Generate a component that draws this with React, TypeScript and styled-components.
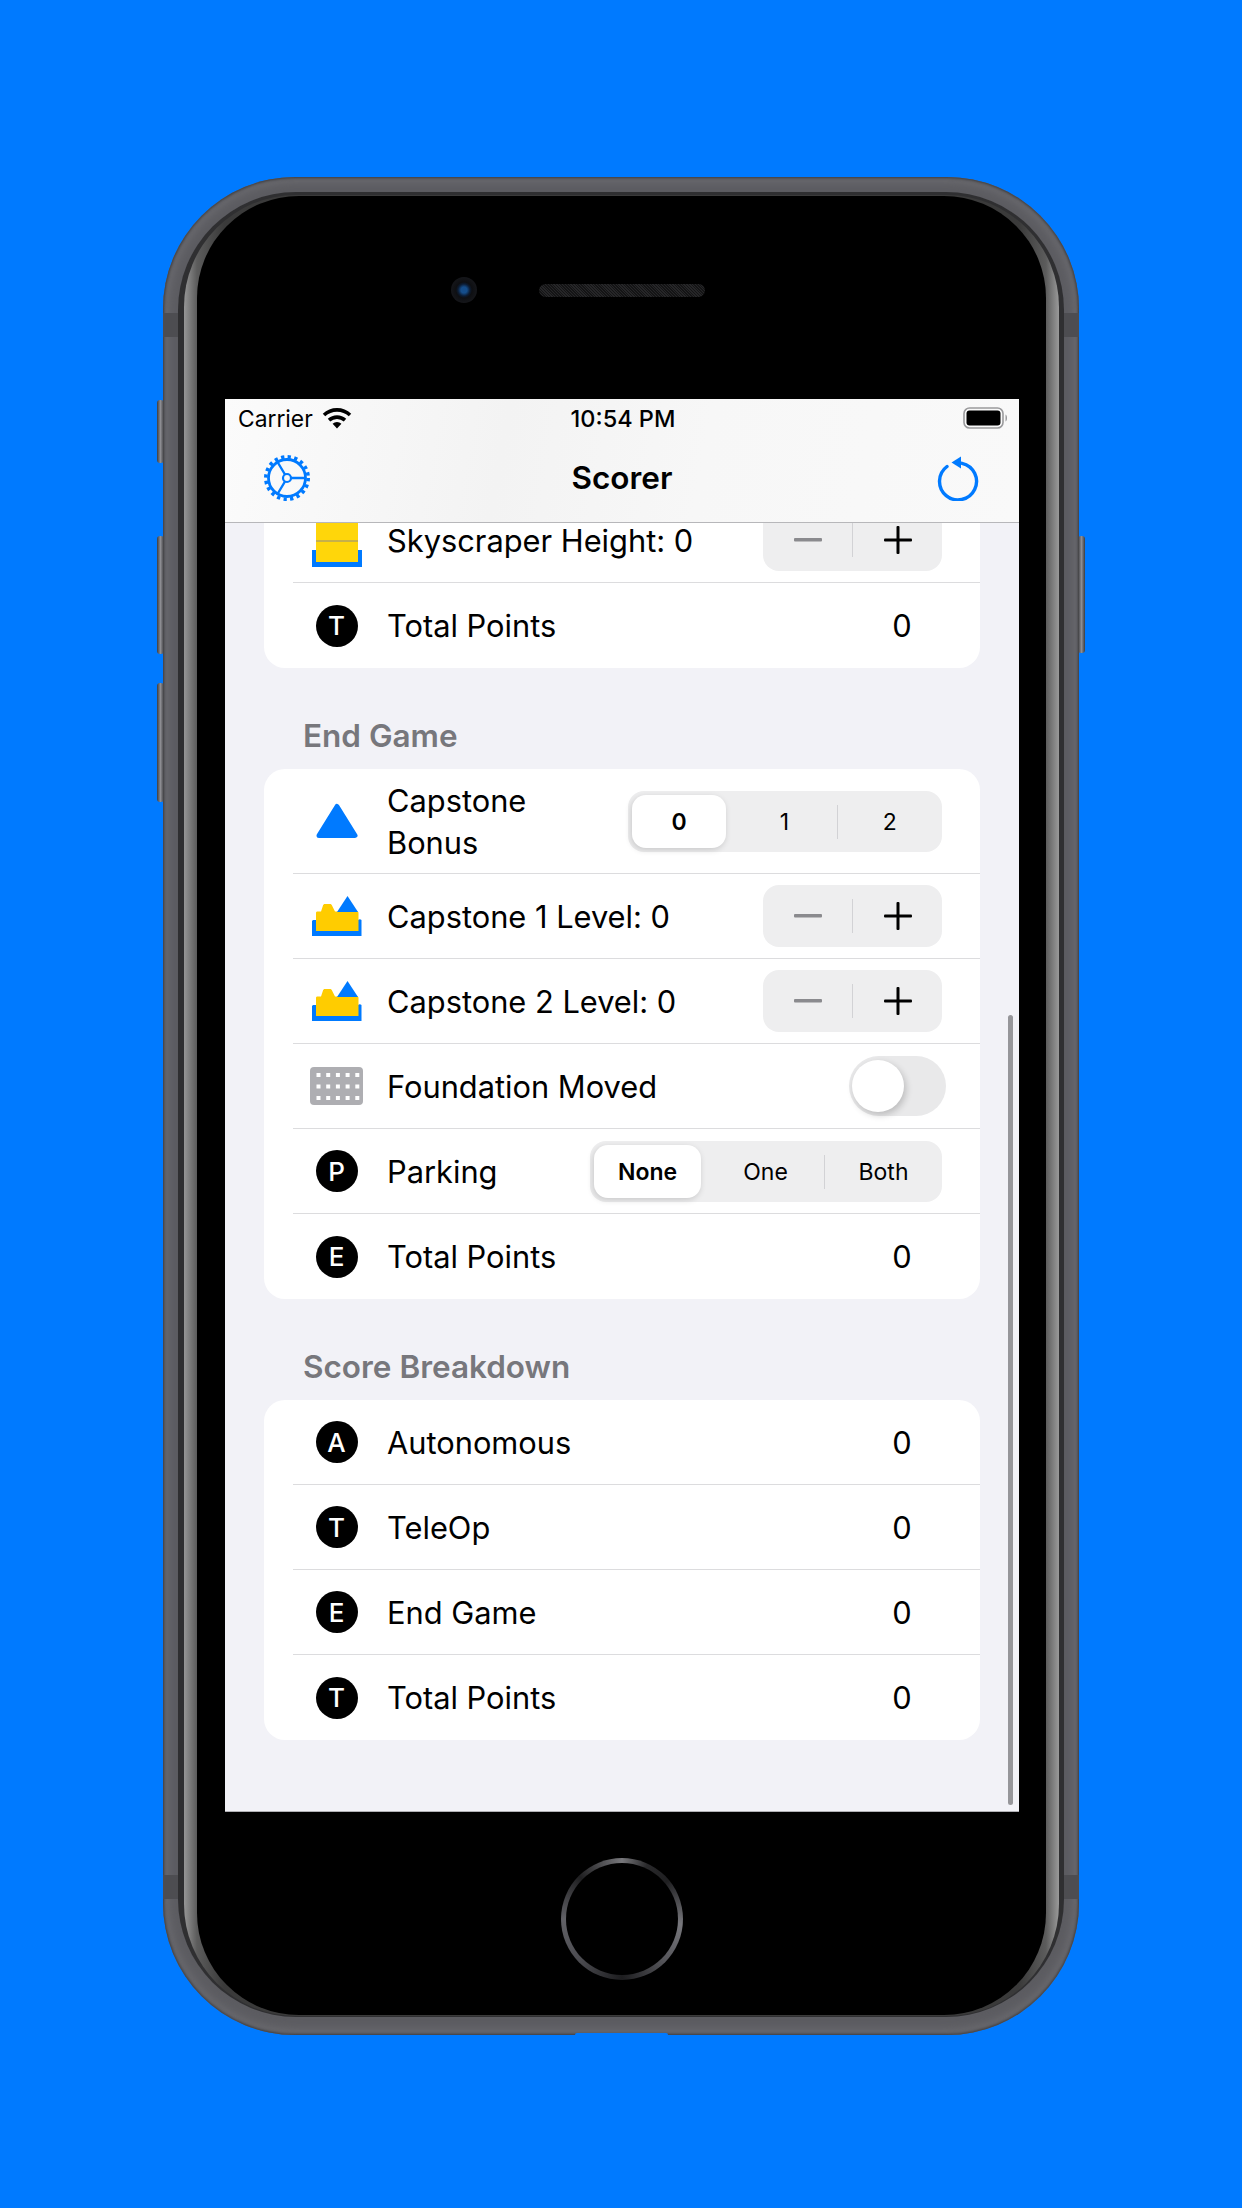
import React from 'react';
import styled, { createGlobalStyle } from 'styled-components';

const blue = '#007aff';
const yellow = '#ffcc00';

const GlobalStyle = createGlobalStyle`
  html, body {
    margin: 0;
    background: ${blue};
  }
  body {
    font-family: Inter, "Liberation Sans", sans-serif;
    color: #000;
  }
  * {
    box-sizing: border-box;
  }
`;

const Page = styled.div`
  width: 1242px;
  height: 2208px;
  padding-top: 177px;
  display: flex;
  justify-content: center;
  overflow: hidden;
  background: ${blue};
`;

const Phone = styled.div`
  position: relative;
  width: 916px;
  height: 1858px;
  padding: 15px 15px 18px 15px;
  display: flex;
  border-radius: 132px;
  background: #5c5c61;
  box-shadow: inset 0 0 3px 1px #38383b, inset 0 0 10px 5px #6c6c71;
`;

const DarkBand = styled.div`
  flex: 1;
  display: flex;
  padding: 3px 5px 1px 6px;
  border-radius: 118px;
  background: #2f2f31;
`;

const LightRing = styled.div`
  flex: 1;
  display: flex;
  padding: 1px 13px 1px 13px;
  border-radius: 112px;
  background: linear-gradient(
    to right,
    #969696 0,
    #5c5c5c 13px,
    #3a3a3a 40px,
    #3a3a3a calc(100% - 40px),
    #5c5c5c calc(100% - 13px),
    #9a9a9a 100%
  );
`;

const Bezel = styled.div`
  flex: 1;
  display: flex;
  flex-direction: column;
  padding: 0 27px 0 28px;
  border-radius: 102px;
  background: #000;
`;

const SideButton = styled.div<{ $right?: boolean; $top: number; $height: number }>`
  position: absolute;
  top: ${(p) => p.$top}px;
  height: ${(p) => p.$height}px;
  width: 7px;
  ${(p) => (p.$right ? 'right: -6px;' : 'left: -6px;')}
  border-radius: 3px;
  background: linear-gradient(to right, #3d3d40, #8d8d92 50%, #3d3d40);
`;

const AntennaBand = styled.div<{ $right?: boolean; $top: number }>`
  position: absolute;
  top: ${(p) => p.$top}px;
  ${(p) => (p.$right ? 'right: 0;' : 'left: 0;')}
  width: 15px;
  height: 24px;
  background: #4d4d51;
`;

const BottomNotch = styled.div`
  position: absolute;
  left: 412px;
  bottom: 0;
  width: 93px;
  height: 2px;
  border-radius: 3px 3px 0 0;
  background: ${blue};
`;

const TopBezel = styled.div`
  flex: 0 0 203px;
  padding-top: 88px;
  display: flex;
  justify-content: center;
  align-items: flex-start;
`;

const Speaker = styled.div`
  position: relative;
  width: 166px;
  height: 13px;
  border-radius: 7px;
  background: repeating-linear-gradient(45deg, #141415 0 1px, #262628 1px 2px);
`;

const Camera = styled.div`
  position: absolute;
  right: calc(100% + 62px);
  top: -7px;
  width: 26px;
  height: 26px;
  border-radius: 50%;
  background: radial-gradient(circle, #154d8a 0 3px, #0c1c33 6px, #0e0f12 8px, #15161a 13px);
`;

const HomeBezel = styled.div`
  flex: 0 0 203px;
  padding-top: 46px;
  display: flex;
  justify-content: center;
  align-items: flex-start;
`;

const HomeRing = styled.div`
  width: 122px;
  height: 122px;
  padding: 5px;
  border-radius: 50%;
  background: conic-gradient(
    #77777b 0deg,
    #29292b 25deg,
    #1f1f21 50deg,
    #77777c 95deg,
    #55555a 135deg,
    #1d1d1f 180deg,
    #4b4b50 225deg,
    #616166 270deg,
    #1f1f21 315deg,
    #77777b 360deg
  );
`;

const HomeInner = styled.div`
  width: 100%;
  height: 100%;
  border-radius: 50%;
  background: #000;
`;

const Screen = styled.div`
  position: relative;
  flex: 1;
  min-height: 0;
  display: flex;
  flex-direction: column;
  overflow: hidden;
  background: #f2f2f7;
  box-shadow: inset 0 -1px 0 #b0b0b4;
`;

const TopBar = styled.div`
  position: relative;
  z-index: 1;
  flex: 0 0 124px;
  display: flex;
  flex-direction: column;
  border-bottom: 1px solid #b7b7ba;
  background: linear-gradient(100deg, #fbfbfb 0%, #f3f3f3 35%, #f7f7f7 60%, #f9f9f9 100%);
`;

const StatusBar = styled.div`
  flex: 0 0 38px;
  display: grid;
  grid-template-columns: 1fr auto 1fr;
  align-items: center;
  padding: 0 11px 0 13px;
  font-size: 22.8px;
`;

const StatusLeft = styled.div`
  display: flex;
  align-items: center;
  gap: 9px;
`;

const StatusTime = styled.div`
  font-size: 23.5px;
  font-weight: 500;
`;

const StatusRight = styled.div`
  display: flex;
  justify-content: flex-end;
`;

const NavBar = styled.div`
  flex: 1;
  display: grid;
  grid-template-columns: 1fr auto 1fr;
  align-items: center;
  padding: 0 38px 4px 38px;
`;

const NavRight = styled.div`
  display: flex;
  justify-content: flex-end;
`;

const NavTitle = styled.div`
  font-size: 31.5px;
  font-weight: 600;
`;

const Scroller = styled.div`
  flex: 1;
  min-height: 0;
  overflow: hidden;
  padding: 0 39px;
`;

const ScrollContent = styled.div`
  margin-top: -25px;
`;

const ScrollThumb = styled.div`
  position: absolute;
  right: 6px;
  top: 616px;
  width: 5px;
  height: 790px;
  border-radius: 3px;
  background: #96969a;
`;

const Card = styled.div`
  overflow: hidden;
  border-radius: 21px;
  background: #fff;
`;

const FirstCard = styled(Card)`
  border-radius: 0 0 21px 21px;
`;

const SectionTitle = styled.div`
  padding: 51px 0 16px 39px;
  font-size: 31.5px;
  line-height: 34px;
  font-weight: 600;
  color: #77777c;
`;

const Row = styled.div<{ $tall?: boolean }>`
  height: ${(p) => (p.$tall ? 105 : 85)}px;
  margin-left: 29px;
  padding-right: 38px;
  display: flex;
  align-items: center;
  border-bottom: 1px solid #dcdcde;

  &:last-child {
    border-bottom: 0;
  }
`;

const IconSlot = styled.div`
  flex: 0 0 87px;
  display: flex;
  justify-content: center;
  align-items: center;
`;

const RowLabel = styled.div`
  flex: 1;
  margin-left: 7px;
  padding-top: 1px;
  font-size: 30.8px;
  line-height: 42px;
`;

const NarrowLabel = styled(RowLabel)`
  flex: 0 0 170px;
  margin-right: auto;
`;

const RowValue = styled.div`
  width: 80px;
  text-align: center;
  font-size: 30.8px;
`;

const LetterBadge = styled.div`
  width: 42px;
  height: 42px;
  border-radius: 50%;
  display: flex;
  align-items: center;
  justify-content: center;
  background: #000;
  color: #fff;
  font-size: 26px;
  font-weight: 500;
`;

const Stepper = styled.div`
  width: 179px;
  height: 62px;
  flex: none;
  display: flex;
  align-items: center;
  border-radius: 16px;
  background: #eeeeef;
`;

const StepperCell = styled.div`
  flex: 1;
  display: flex;
  align-items: center;
  justify-content: center;
`;

const StepperDivider = styled.div`
  width: 1px;
  height: 34px;
  background: #d2d2d5;
`;

const Segmented = styled.div`
  height: 61px;
  margin-top: 1px;
  flex: none;
  display: flex;
  align-items: center;
  border-radius: 16px;
  background: #eeeeef;
`;

const Segment = styled.div<{ $cell: number }>`
  flex: 0 0 ${(p) => p.$cell}px;
  height: 53px;
  display: flex;
  align-items: center;
  justify-content: center;
  font-size: 23px;
`;

const ActiveSegment = styled(Segment)`
  flex-basis: ${(p) => p.$cell - 10}px;
  margin: 0 6px 0 4px;
  border-radius: 14px;
  font-weight: 600;
  background: #fff;
  box-shadow: -1px 2px 6px rgba(0, 0, 0, 0.16);
`;

const SegmentDivider = styled.div`
  flex: none;
  width: 1px;
  height: 34px;
  background: #d2d2d5;
`;

const Toggle = styled.div`
  flex: none;
  width: 97px;
  height: 60px;
  margin-right: -4px;
  padding: 4px 3px;
  border-radius: 30px;
  background: #e9e9ea;
`;

const ToggleKnob = styled.div`
  width: 52px;
  height: 52px;
  border-radius: 50%;
  background: #fff;
  box-shadow: 2px 3px 7px rgba(0, 0, 0, 0.2);
`;

const GearIcon = () => {
  const cx = 24;
  const cy = 24;
  return (
    <svg width="48" height="48" viewBox="0 0 48 48" fill="none" stroke={blue}>
      <circle cx={cx} cy={cy} r="21.2" strokeWidth="3.6" strokeDasharray="3.3 3.36" />
      <circle cx={cx} cy={cy} r="18.5" strokeWidth="2.8" />
      <circle cx={cx} cy={cy} r="4" strokeWidth="2.2" />
      <path d="M28 24H42M22 20.5L14.5 8M22 27.5L14.5 40" strokeWidth="2.4" />
    </svg>
  );
};

const RefreshIcon = () => (
  <svg width="44" height="46" viewBox="0 0 44 46" fill="none">
    <path
      d="M25 8.3A18.5 18.5 0 1 1 10 11.5"
      stroke={blue}
      strokeWidth="3.4"
      strokeLinecap="round"
    />
    <path d="M14.5 7.5L24 1.5V13.5Z" fill={blue} />
  </svg>
);

const WifiIcon = () => (
  <svg width="30" height="22" viewBox="0 0 30 22" fill="none" stroke="#000" strokeWidth="3.6">
    <path d="M2 8A19 19 0 0 1 28 8" />
    <path d="M7 13.2A12 12 0 0 1 23 13.2" />
    <path d="M15 21.5L10.6 16.8A6.4 6.4 0 0 1 19.4 16.8Z" fill="#000" stroke="none" />
  </svg>
);

const BatteryIcon = () => (
  <svg width="45" height="22" viewBox="0 0 45 22">
    <rect x="1" y="1" width="39" height="20" rx="5.5" fill="none" stroke="#9a9a9c" strokeWidth="1.6" />
    <rect x="3.5" y="3.5" width="34" height="15" rx="3" fill="#000" />
    <path d="M42.5 7.5C44.5 8 44.5 14 42.5 14.5Z" fill="#9a9a9c" />
  </svg>
);

const MinusIcon = () => (
  <svg width="28" height="4" viewBox="0 0 28 4">
    <rect width="28" height="3.4" rx="1" fill="#8a8a8e" />
  </svg>
);

const PlusIcon = () => (
  <svg width="28" height="28" viewBox="0 0 28 28" fill="#000">
    <rect y="12.5" width="28" height="3" rx="1" />
    <rect x="12.5" width="3" height="28" rx="1" />
  </svg>
);

const TriangleIcon = () => (
  <svg width="42" height="36" viewBox="0 0 42 36">
    <path
      d="M21 3.5L39 32.5H3Z"
      fill={blue}
      stroke={blue}
      strokeWidth="5"
      strokeLinejoin="round"
    />
  </svg>
);

const SkyscraperIcon = () => (
  <svg width="50" height="53" viewBox="0 0 50 53">
    <path d="M0 36H4V48H46V36H50V53H0Z" fill={blue} />
    <rect x="0" y="47" width="50" height="6" rx="1" fill={blue} />
    <rect x="4" y="0" width="42" height="48" fill="#ffd60a" />
    <rect x="4" y="26" width="42" height="2" fill="#c6b04a" />
  </svg>
);

const CapstoneIcon = () => (
  <svg width="50" height="41" viewBox="0 0 50 41">
    <path d="M1 24H46A3 3 0 0 1 49.5 24V40H0V25Z" fill={blue} />
    <path
      d="M4 35V17C4 16 4.5 15.5 5.5 15.5H9L11 9.5C11.3 8.5 12 8 13 8H18C19 8 19.6 8.5 20 9.5L23 15.5H45C46 15.5 46.5 16 46.5 17V35Z"
      fill={yellow}
    />
    <path d="M35.5 0L46 16H25Z" fill={blue} />
  </svg>
);

const FoundationIcon = () => {
  const dots = [];
  for (let row = 0; row < 3; row++) {
    for (let col = 0; col < 5; col++) {
      dots.push(<rect key={`${row}-${col}`} x={6.5 + col * 9.7} y={6 + row * 11.5} width="4" height="4" fill="#fff" />);
    }
  }
  return (
    <svg width="53" height="38" viewBox="0 0 53 38">
      <rect width="53" height="38" rx="4" fill="#aeaeb2" />
      {dots}
    </svg>
  );
};

const StepperControl = () => (
  <Stepper>
    <StepperCell>
      <MinusIcon />
    </StepperCell>
    <StepperDivider />
    <StepperCell>
      <PlusIcon />
    </StepperCell>
  </Stepper>
);

const SegmentedControl = ({ options, cell }: { options: string[]; cell: number }) => (
  <Segmented>
    <ActiveSegment $cell={cell}>{options[0]}</ActiveSegment>
    <Segment $cell={cell}>{options[1]}</Segment>
    <SegmentDivider />
    <Segment $cell={cell}>{options[2]}</Segment>
  </Segmented>
);

const TotalRow = ({ letter, label }: { letter: string; label: string }) => (
  <Row>
    <IconSlot>
      <LetterBadge>{letter}</LetterBadge>
    </IconSlot>
    <RowLabel>{label}</RowLabel>
    <RowValue>0</RowValue>
  </Row>
);

const StepperRow = ({ icon, label }: { icon: React.ReactNode; label: string }) => (
  <Row>
    <IconSlot>{icon}</IconSlot>
    <RowLabel>{label}</RowLabel>
    <StepperControl />
  </Row>
);

const App: React.FC = () => {
  return (
    <Page>
      <GlobalStyle />
      <Phone>
        <SideButton $top={223} $height={63} />
        <SideButton $top={359} $height={118} />
        <SideButton $top={506} $height={119} />
        <SideButton $right $top={359} $height={117} />
        <AntennaBand $top={136} />
        <AntennaBand $right $top={136} />
        <AntennaBand $top={1698} />
        <AntennaBand $right $top={1698} />
        <BottomNotch />
        <DarkBand>
          <LightRing>
            <Bezel>
              <TopBezel>
                <Speaker>
                  <Camera />
                </Speaker>
              </TopBezel>
              <Screen>
                <TopBar>
                  <StatusBar>
                    <StatusLeft>
                      Carrier
                      <WifiIcon />
                    </StatusLeft>
                    <StatusTime>10:54 PM</StatusTime>
                    <StatusRight>
                      <BatteryIcon />
                    </StatusRight>
                  </StatusBar>
                  <NavBar>
                    <GearIcon />
                    <NavTitle>Scorer</NavTitle>
                    <NavRight>
                      <RefreshIcon />
                    </NavRight>
                  </NavBar>
                </TopBar>
                <Scroller>
                  <ScrollContent>
                    <FirstCard>
                      <StepperRow icon={<SkyscraperIcon />} label="Skyscraper Height: 0" />
                      <TotalRow letter="T" label="Total Points" />
                    </FirstCard>

                    <SectionTitle>End Game</SectionTitle>
                    <Card>
                      <Row $tall>
                        <IconSlot>
                          <TriangleIcon />
                        </IconSlot>
                        <NarrowLabel>Capstone Bonus</NarrowLabel>
                        <SegmentedControl options={['0', '1', '2']} cell={104.33} />
                      </Row>
                      <StepperRow icon={<CapstoneIcon />} label="Capstone 1 Level: 0" />
                      <StepperRow icon={<CapstoneIcon />} label="Capstone 2 Level: 0" />
                      <Row>
                        <IconSlot>
                          <FoundationIcon />
                        </IconSlot>
                        <RowLabel>Foundation Moved</RowLabel>
                        <Toggle>
                          <ToggleKnob />
                        </Toggle>
                      </Row>
                      <Row>
                        <IconSlot>
                          <LetterBadge>P</LetterBadge>
                        </IconSlot>
                        <NarrowLabel>Parking</NarrowLabel>
                        <SegmentedControl options={['None', 'One', 'Both']} cell={117} />
                      </Row>
                      <TotalRow letter="E" label="Total Points" />
                    </Card>

                    <SectionTitle>Score Breakdown</SectionTitle>
                    <Card>
                      <TotalRow letter="A" label="Autonomous" />
                      <TotalRow letter="T" label="TeleOp" />
                      <TotalRow letter="E" label="End Game" />
                      <TotalRow letter="T" label="Total Points" />
                    </Card>
                  </ScrollContent>
                </Scroller>
                <ScrollThumb />
              </Screen>
              <HomeBezel>
                <HomeRing>
                  <HomeInner />
                </HomeRing>
              </HomeBezel>
            </Bezel>
          </LightRing>
        </DarkBand>
      </Phone>
    </Page>
  );
};

export default App;
